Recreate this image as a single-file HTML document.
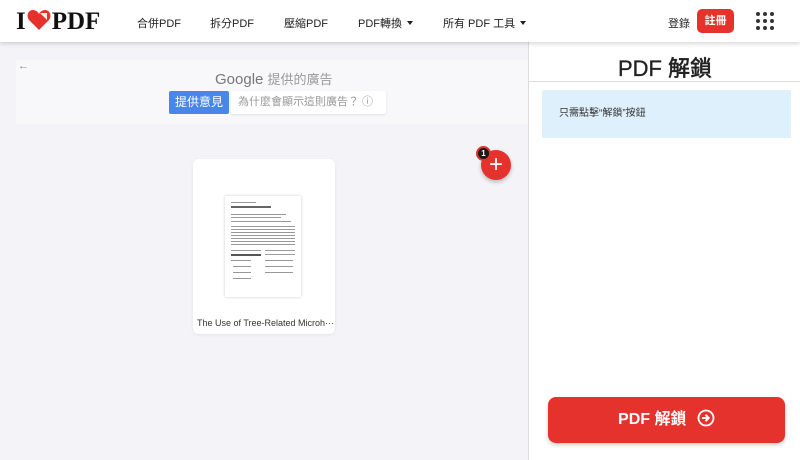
<!DOCTYPE html>
<html><head><meta charset="utf-8"><style>
*{margin:0;padding:0;box-sizing:border-box}
body{width:800px;height:460px;overflow:hidden;font-family:"Liberation Sans","Noto Sans CJK TC",sans-serif;background:#f4f4f8;position:relative;color:#222}
.hdr{position:absolute;left:0;top:0;width:800px;height:42px;background:#fff;box-shadow:0 2px 4px rgba(0,0,0,.15);z-index:5}
.logo{position:absolute;left:16px;top:8px;font-family:"Liberation Serif",serif;font-weight:900;font-size:25px;letter-spacing:0;color:#111}
.nav{position:absolute;top:15px;font-size:11px;color:#222}
.tri{display:inline-block;border-left:3.5px solid transparent;border-right:3.5px solid transparent;border-top:4px solid #222;margin-left:5px;vertical-align:2px}
.reg{position:absolute;left:697px;top:9px;width:37px;height:24px;background:#e5322d;border-radius:5px;color:#fff;font-size:11px;font-weight:bold;text-align:center;line-height:24px}
.dots{position:absolute;left:756px;top:12px;width:18px;height:18px}
.dots i{position:absolute;width:4px;height:4px;border-radius:50%;background:#333}
.side{position:absolute;left:528px;top:42px;width:272px;height:418px;background:#fff;border-left:1px solid #ddd}
.ttl{position:absolute;left:0;width:272px;top:9px;text-align:center;font-size:22px;color:#222;font-weight:500;-webkit-text-stroke:0.3px #222}
.line{position:absolute;left:0;top:39px;width:272px;height:1px;background:#ddd}
.hint{position:absolute;left:13px;top:48px;width:249px;height:48px;background:#dff0fd;border-radius:2px;font-size:10px;line-height:48px;padding-left:17px;color:#333}
.btn{position:absolute;left:19px;top:355px;width:237px;height:46px;background:#e5322d;border-radius:8px;box-shadow:0 2px 4px rgba(0,0,0,.2);color:#fff;font-size:16px;font-weight:bold;text-align:center;line-height:46px}
.ad{position:absolute;left:16px;top:60px;width:512px;height:64px;background:#f8f8fa}
.card{position:absolute;left:193px;top:159px;width:142px;height:175px;background:#fff;border-radius:6px;box-shadow:0 1px 3px rgba(0,0,0,.08)}
.pg{position:absolute;left:32px;top:37px;width:76px;height:101px;background:#fff;box-shadow:0 0 3px rgba(0,0,0,.2)}
.pg b{position:absolute;height:1px;background:#999}
.fab{position:absolute;left:481px;top:150px;width:30px;height:30px;border-radius:50%;background:#e5322d;box-shadow:0 2px 4px rgba(0,0,0,.25);color:#fff;text-align:center;line-height:29px;font-size:24px;font-weight:300}
.badge{position:absolute;left:476px;top:146px;width:15px;height:15px;border-radius:50%;background:#1a1a1a;border:2px solid #e5322d;color:#fff;font-size:8px;font-weight:bold;text-align:center;line-height:11px}
</style></head><body>
<div class="hdr">
<div class="logo">I<svg width="24" height="22" viewBox="0 0 24 22" style="vertical-align:-2px;margin:0 1px"><path d="M12 21 L2 11 C-1 7 1 1 6 1 C9 1 11 3 12 5 C13 3 15 1 18 1 C23 1 25 7 22 11 Z" fill="#e5322d"/><path d="M13 4 L20 4 L20 11 Z" fill="#fff" opacity=".9"/></svg>PDF</div>
<div class="nav" style="left:137px">合併PDF</div>
<div class="nav" style="left:210px">拆分PDF</div>
<div class="nav" style="left:284px">壓縮PDF</div>
<div class="nav" style="left:358px">PDF轉換<span class="tri"></span></div>
<div class="nav" style="left:443px">所有 PDF 工具<span class="tri"></span></div>
<div class="nav" style="left:668px">登錄</div>
<div class="reg">註冊</div>
<div class="dots"><i style="left:0;top:0"></i><i style="left:7px;top:0"></i><i style="left:14px;top:0"></i><i style="left:0;top:7px"></i><i style="left:7px;top:7px"></i><i style="left:14px;top:7px"></i><i style="left:0;top:14px"></i><i style="left:7px;top:14px"></i><i style="left:14px;top:14px"></i></div>
</div>
<div class="ad">
<div style="position:absolute;left:2px;top:0;font-size:11px;color:#888">←</div>
<div style="position:absolute;left:199px;top:9px;font-size:15px;color:#777">Google <span style="font-size:13px;color:#999">提供的廣告</span></div>
<div style="position:absolute;left:153px;top:31px;width:60px;height:23px;background:#4a86e8;color:#fff;font-size:12px;text-align:center;line-height:23px;border-radius:2px">提供意見</div>
<div style="position:absolute;left:215px;top:31px;width:155px;height:23px;background:#fff;color:#999;font-size:11px;line-height:23px;padding-left:7px;border-radius:2px;box-shadow:0 1px 2px rgba(0,0,0,.1)">為什麼會顯示這則廣告？ ⓘ</div>
</div>
<div class="card">
<div class="pg">
<b style="left:6px;top:6px;width:25px"></b><b style="left:6px;top:10px;width:40px;height:2px;background:#666"></b><b style="left:6px;top:18px;width:55px"></b><b style="left:6px;top:21px;width:50px"></b><b style="left:6px;top:25px;width:60px"></b>
<b style="left:6px;top:30px;width:64px"></b><b style="left:6px;top:33px;width:64px"></b><b style="left:6px;top:36px;width:64px"></b><b style="left:6px;top:39px;width:64px"></b><b style="left:6px;top:42px;width:64px"></b><b style="left:6px;top:45px;width:64px"></b><b style="left:6px;top:48px;width:64px"></b>
<b style="left:6px;top:54px;width:30px"></b><b style="left:40px;top:54px;width:30px"></b><b style="left:6px;top:58px;width:30px;height:2px;background:#555"></b><b style="left:40px;top:58px;width:30px"></b>
<b style="left:6px;top:64px;width:20px"></b><b style="left:40px;top:64px;width:28px"></b><b style="left:8px;top:70px;width:18px"></b><b style="left:40px;top:70px;width:28px"></b><b style="left:8px;top:76px;width:18px"></b><b style="left:40px;top:76px;width:28px"></b><b style="left:8px;top:82px;width:18px"></b>
</div>
<div style="position:absolute;left:4px;top:159px;font-size:9px;color:#333;white-space:nowrap">The Use of Tree-Related Microh···</div>
</div>
<div class="fab">+</div>
<div class="badge">1</div>
<div class="side">
<div class="ttl">PDF 解鎖</div>
<div class="line"></div>
<div class="hint">只需點擊“解鎖”按鈕</div>
<div class="btn">PDF 解鎖 <svg width="18" height="18" viewBox="0 0 18 18" style="vertical-align:-3px;margin-left:6px"><circle cx="9" cy="9" r="7.5" fill="none" stroke="#fff" stroke-width="1.8"/><path d="M5 9 H11 M8.5 5.8 L11.7 9 L8.5 12.2" stroke="#fff" stroke-width="2" fill="none"/></svg></div>
</div>
</body></html>
